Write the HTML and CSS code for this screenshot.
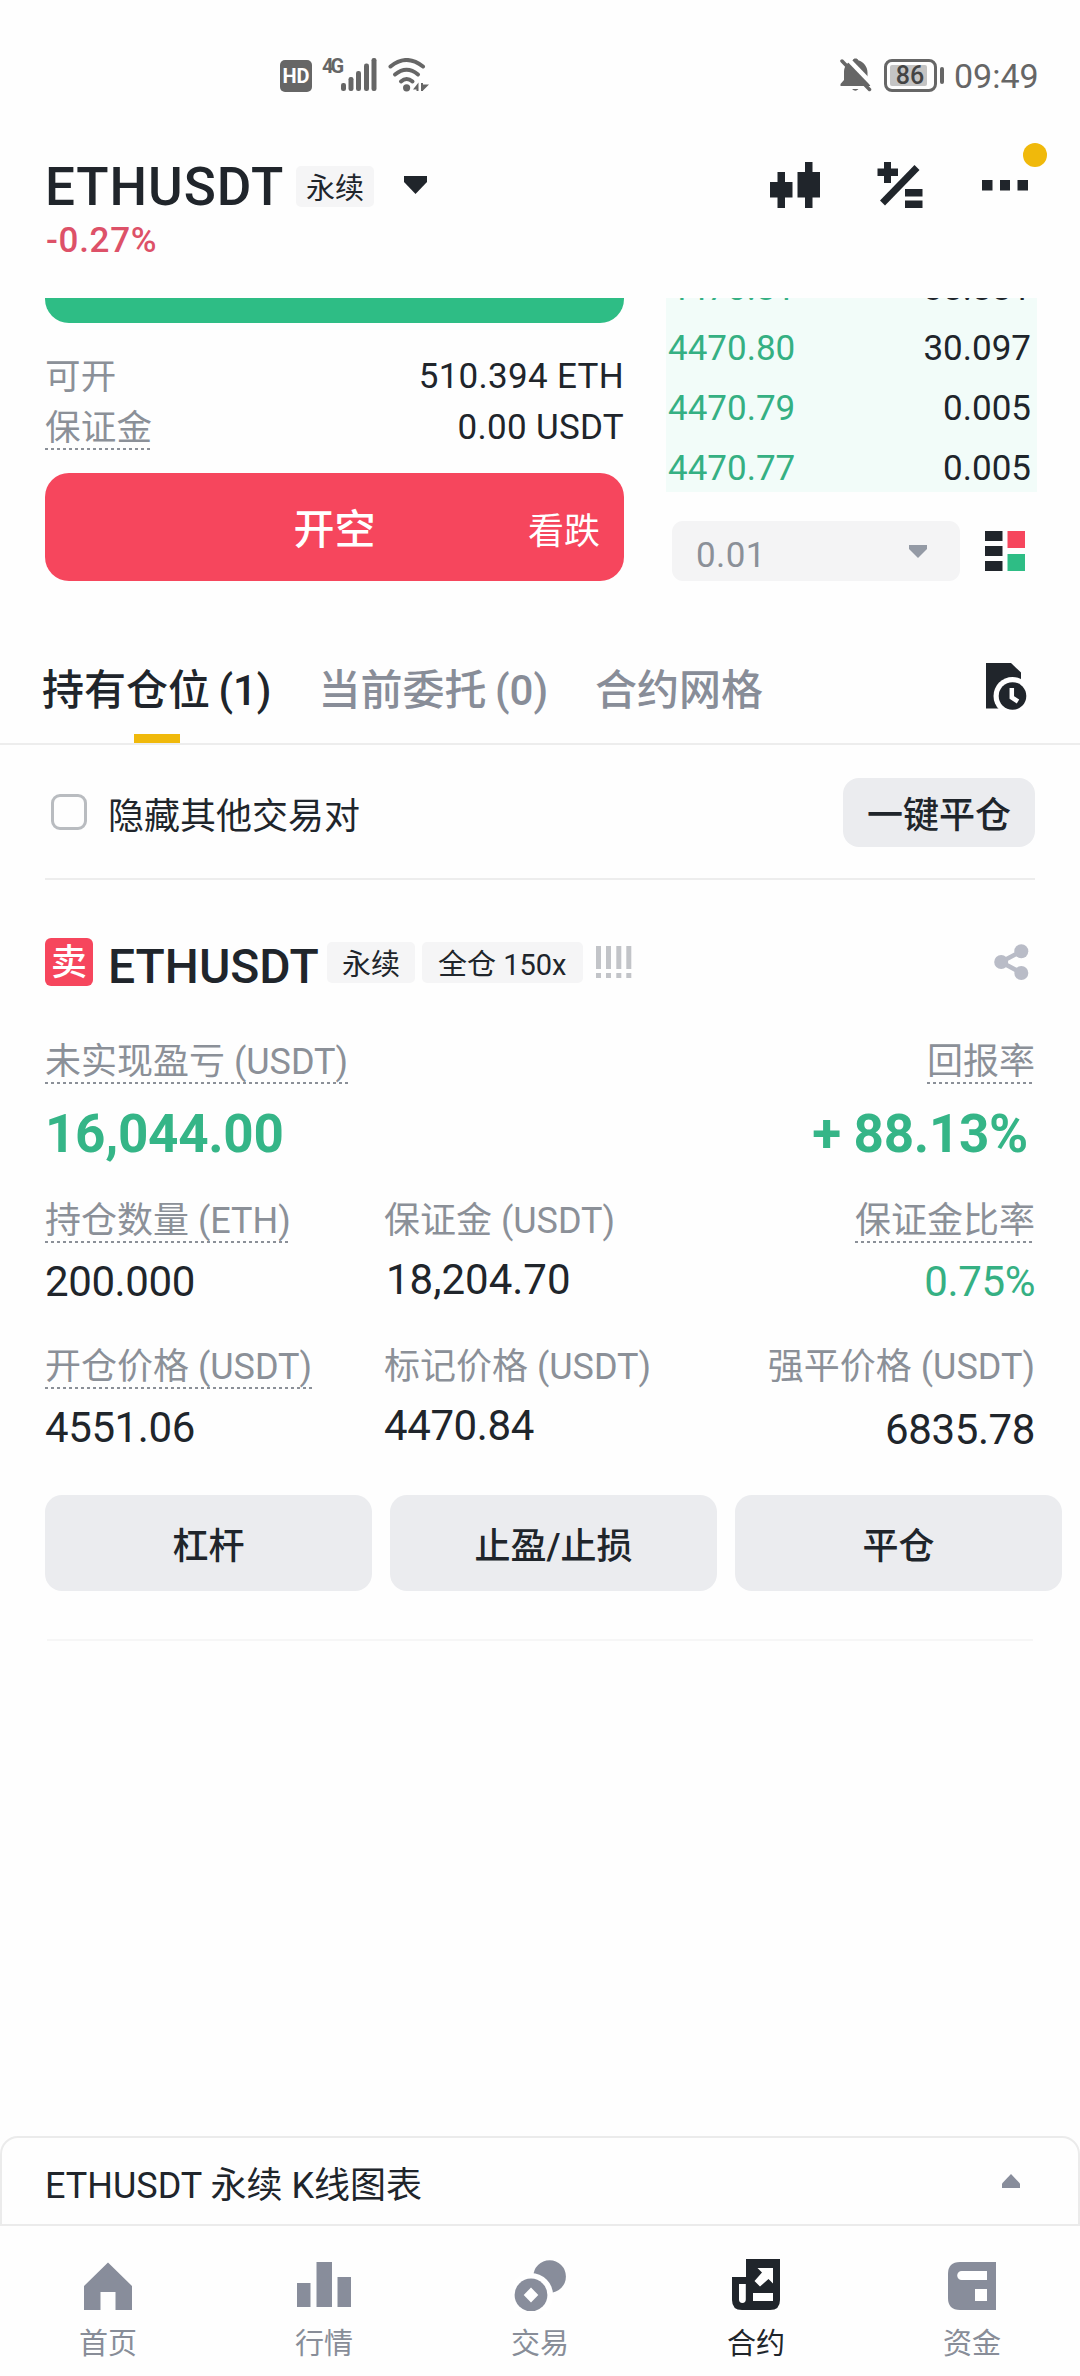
FILE: index.html
```html
<!DOCTYPE html>
<html lang="zh-CN">
<head>
    <meta charset="UTF-8">
    <meta name="viewport" content="width=device-width, initial-scale=1.0">
    <title>ETHUSDT 永续</title>

    <link rel="stylesheet" href="styles.css">
</head>
<body>
    <!-- Status bar -->
    <div class="status">
        <span class="hd">HD</span>
        <span class="net">4G</span>
        <svg class="signal" width="36" height="34" viewBox="0 0 36 34">
            <rect x="0" y="25" width="5" height="8" rx="2.2"/>
            <rect x="7.5" y="19" width="5" height="14" rx="2.2"/>
            <rect x="15" y="13" width="5" height="20" rx="2.2"/>
            <rect x="23" y="5.500" width="5" height="27.500" rx="2.2"/>
            <rect x="30.500" y="0" width="5" height="33" rx="2.2"/>
        </svg>
        <svg class="wifi" width="42" height="34" viewBox="0 0 42 34">
            <g fill="none" stroke="#666" stroke-width="4" stroke-linecap="round">
                <path d="M3.500 8.500Q19.600-4.500 36 8.500"/>
                <path d="M8 16.500Q19.600 7 31 16.500"/>
                <path d="M14 23.500Q19.600 18.500 25.500 23.500"/>
            </g>
            <circle cx="19.600" cy="29.800" r="3.600"/>
            <path d="M26 31.500l5.500-7v8.500h-2v-1.500zM34 25h2v1.500h6L36 32.500v.5h-2z"/>
        </svg>
        <svg class="bell" width="32" height="34" viewBox="0 0 32 34">
            <path d="M15.500 .5c1.500 0 2.400.6 2.800 1.800C23.500 4 27.500 8.500 27.500 14.500v8l3 5.500H.5v-2l3.500-4v-8C4 8.500 7.500 4 12.700 2.300 13.100 1.100 14 .5 15.500 .5zM12 31h6.500q-3 3.500-6.500 0z"/>
            <path d="M6-1L33 27" stroke="#fff" stroke-width="4.500"/>
            <path d="M2 3L29.500 31.500" stroke="#666" stroke-width="3.500" stroke-linecap="round"/>
        </svg>
        <span class="battery"><span class="battery-level">86</span></span>
        <span class="battery-tip"></span>
        <span class="time">09:49</span>
    </div>

    <!-- Header -->
    <div class="header">
        <div>
            <div class="pair">
                <h1>ETHUSDT</h1>
                <span class="tag">永续</span>
                <svg class="pair-caret" width="23" height="18" viewBox="0 0 23 18"><path d="M0 0h23v6L11.500 18 0 6z"/></svg>
            </div>
            <div class="change">-0.27%</div>
        </div>
        <div class="tools">
            <svg width="50" height="46" viewBox="0 0 50 46">
                <path d="M7.500 10h7.500v10h7.500v15.500H15V46H7.500V35.500H0V20h7.500zM35 0h7.500v10H50v25.500h-7.500V46H35V35.500h-7.500V10H35z"/>
            </svg>
            <svg width="46" height="46" viewBox="0 0 46 46">
                <path d="M7 0h7v6.500h7V14h-7v7H7v-7H.5V6.500H7zM28 27h17.500v7.500H28zM28 38.500h17.500V46H28z"/>
                <path d="M5.500 41L40 5.500" stroke="#20252b" stroke-width="7"/>
            </svg>
            <div class="more">
                <svg width="46" height="46" viewBox="0 0 46 46"><path d="M0 18h10.500v10.500H0zM18 18h10v10.500H18zM35.500 18H46v10.500H35.500z"/></svg>
                <span class="dot"></span>
            </div>
        </div>
    </div>

    <!-- Order form and order book -->
    <div class="trade">
        <div class="form">
            <div class="btn-long"></div>
            <div class="form-row"><span class="label">可开</span><span>510.394 ETH</span></div>
            <div class="form-row"><span class="label hint">保证金</span><span>0.00 USDT</span></div>
            <div class="btn-short">
                <span>开空</span>
                <span class="side">看跌</span>
            </div>
        </div>
        <div class="book-col">
            <div class="book">
                <div class="book-row"><span class="green">4470.81</span><span>38.881</span></div>
                <div class="book-row"><span class="green">4470.80</span><span>30.097</span></div>
                <div class="book-row"><span class="green">4470.79</span><span>0.005</span></div>
                <div class="book-row"><span class="green">4470.77</span><span>0.005</span></div>
            </div>
            <div class="book-tools">
                <div class="select">
                    <span>0.01</span>
                    <svg width="18" height="13" viewBox="0 0 18 13"><path d="M0 0h18v4L9 13 0 4z"/></svg>
                </div>
                <svg width="40" height="40" viewBox="0 0 40 40">
                    <path d="M0 0h17.500v10H0zM0 15h17.500v10H0zM0 30h17.500v10H0z"/>
                    <path d="M22.500 0H40v17H22.500z" fill="#f6465d"/>
                    <path d="M22.500 23H40v17H22.500z" fill="#2ebd85"/>
                </svg>
            </div>
        </div>
    </div>

    <!-- Tabs -->
    <div class="tabs">
        <div class="tab active">持有仓位 (1)</div>
        <div class="tab">当前委托 (0)</div>
        <div class="tab">合约网格</div>
        <svg class="history" width="41" height="48" viewBox="0 0 41 48">
            <path d="M0 0h25l10 9.500V45.500H0z"/>
            <circle cx="26.500" cy="33" r="19" fill="#fff"/>
            <circle cx="26.500" cy="33" r="13.800"/>
            <path d="M25.800 25v9.500l6.200 4" fill="none" stroke="#fff" stroke-width="4.500"/>
        </svg>
    </div>

    <div class="filter">
        <span class="checkbox"></span>
        <span class="filter-text">隐藏其他交易对</span>
        <span class="close-all">一键平仓</span>
    </div>

    <!-- Position -->
    <div class="position">
        <div class="position-head">
            <span class="sell">卖</span>
            <h2>ETHUSDT</h2>
            <span class="tag">永续</span>
            <span class="tag">全仓 150x</span>
            <svg class="risk" width="36" height="32" viewBox="0 0 36 32">
                <path d="M0 0h5v23H0zM10 0h5v23h-5zM20.300 0h5v23h-5zM30.300 0h5v23h-5zM0 27h5v5H0zM10 27h5v5h-5zM20.300 27h5v5h-5zM30.300 27h5v5h-5z"/>
            </svg>
            <svg class="share" width="35" height="36" viewBox="0 0 35 36">
                <path d="M27.500 7.200L7 18l20.500 11" fill="none" stroke="#b9bcc7" stroke-width="4.500"/>
                <circle cx="7.200" cy="18" r="7"/>
                <circle cx="27.300" cy="7.200" r="7"/>
                <circle cx="27.300" cy="29" r="7"/>
            </svg>
        </div>

        <div class="pnl">
            <div>
                <div class="label hint">未实现盈亏 (USDT)</div>
                <div class="pnl-value">16,044.00</div>
            </div>
            <div class="right">
                <div class="label hint">回报率</div>
                <div class="pnl-value roe">+ 88.13%</div>
            </div>
        </div>

        <div class="stats">
            <div>
                <div class="label hint">持仓数量 (ETH)</div>
                <div class="value">200.000</div>
            </div>
            <div class="middle">
                <div class="label">保证金 (USDT)</div>
                <div class="value margin">18,204.70</div>
            </div>
            <div class="right">
                <div class="label hint">保证金比率</div>
                <div class="value green">0.75%</div>
            </div>
            <div>
                <div class="label hint">开仓价格 (USDT)</div>
                <div class="value">4551.06</div>
            </div>
            <div class="middle">
                <div class="label">标记价格 (USDT)</div>
                <div class="value">4470.84</div>
            </div>
            <div class="right">
                <div class="label">强平价格 (USDT)</div>
                <div class="value liq">6835.78</div>
            </div>
        </div>

        <div class="actions">
            <span>杠杆</span>
            <span>止盈/止损</span>
            <span>平仓</span>
        </div>
    </div>

    <!-- Chart drawer -->
    <div class="drawer">
        <span>ETHUSDT 永续 K线图表</span>
        <svg width="18" height="14" viewBox="0 0 18 14"><path d="M9 0l9 9.500V14H0V9.500z"/></svg>
    </div>

    <!-- Bottom navigation -->
    <div class="nav">
        <div class="nav-item">
            <svg width="54" height="52" viewBox="0 0 54 52"><path d="M27 3.500L51 27v24H34.500V33H19.500v18H3V27z"/></svg>
            <span>首页</span>
        </div>
        <div class="nav-item">
            <svg width="54" height="52" viewBox="0 0 54 52"><path d="M0 24h13.500v24H0zM19.500 3H35v45H19.500zM40.500 18H54v30H40.500z"/></svg>
            <span>行情</span>
        </div>
        <div class="nav-item">
            <svg width="54" height="52" viewBox="0 0 54 52">
                <circle cx="36.600" cy="17.500" r="16.300"/>
                <circle cx="18" cy="36" r="22" fill="#fff"/>
                <circle cx="18" cy="36" r="16.400"/>
                <path d="M18 28.500l7.300 7.500-7.300 7.500-7.300-7.500z" fill="#fff"/>
            </svg>
            <span>交易</span>
        </div>
        <div class="nav-item current">
            <svg width="54" height="52" viewBox="0 0 54 52">
                <path d="M17 0h34v41q0 10-10 10H13Q3 51 3 41V18h14z"/>
                <path d="M10 25h6.800v15.500a3.400 3.400 0 0 1-6.800 0zM24 34h20v8H24zM28.500 9H44v15.500l-4.500-4.500L31 27.500l-5.500-5.500L33 13.500z" fill="#fff"/>
            </svg>
            <span>合约</span>
        </div>
        <div class="nav-item">
            <svg width="54" height="52" viewBox="0 0 54 52">
                <path d="M15 3h36v48H15Q3 51 3 39V15Q3 3 15 3z"/>
                <path d="M16.700 12H42v9H16.700a4.500 4.500 0 0 1 0-9zM30 30h12v12H30z" fill="#fff"/>
            </svg>
            <span>资金</span>
        </div>
    </div>
</body>
</html>
```
FILE: styles.css
```css
* {
    box-sizing: border-box;
}

body {
    margin: 0;
    width: 1080px;
    height: 2376px;
    display: flex;
    flex-direction: column;
    overflow: hidden;
    background-color: #fefefe;
    color: #20252b;
    font-family: Roboto, "Noto Sans CJK SC", sans-serif;
    font-size: 36px;
    line-height: 40px;
    white-space: nowrap;
}

h1, h2 {
    margin: 0;
    font-weight: 500;
}

svg {
    display: block;
    flex: none;
    fill: #20252b;
}

.green {
    color: #35b083;
}

/* Status bar */
.status {
    display: flex;
    align-items: flex-start;
    height: 156px;
    padding: 58px 0 0 280px;
    color: #666;
}

.status svg {
    fill: #666;
}

.hd {
    width: 32px;
    height: 32px;
    margin-top: 2px;
    border-radius: 5px;
    background-color: #666;
    color: #fff;
    font-size: 20px;
    font-weight: 700;
    line-height: 32px;
    text-align: center;
}

.net {
    width: 19px;
    margin-left: 10px;
    font-size: 20px;
    font-weight: 700;
    line-height: 16px;
    letter-spacing: -3px;
}

.wifi {
    margin-left: 10px;
}

.bell {
    margin-left: 411px;
}

.battery {
    width: 53px;
    height: 33px;
    margin: 1px 0 0 12px;
    padding: 3px;
    border: 3px solid #666;
    border-radius: 8px;
}

.battery-level {
    display: block;
    width: 37px;
    height: 21px;
    padding-left: 3px;
    border-radius: 2px;
    background-color: #c4c4c4;
    color: #444;
    font-size: 25px;
    font-weight: 500;
    line-height: 21px;
    text-align: center;
}

.battery-tip {
    width: 4px;
    height: 17px;
    margin: 9px 0 0 3px;
    border-radius: 2px;
    background-color: #666;
}

.time {
    margin-left: 10px;
    font-size: 34px;
    line-height: 36px;
}

/* Header */
.header {
    display: flex;
    justify-content: space-between;
    height: 142px;
    padding: 0 52px 0 45px;
}

.pair {
    display: flex;
    align-items: center;
    height: 60px;
}

.pair h1 {
    width: 251px;
    padding-top: 2px;
    font-size: 53px;
    line-height: 60px;
    letter-spacing: 0.9px;
}

.tag {
    height: 41px;
    border-radius: 5px;
    background-color: #f5f5f6;
    font-size: 29px;
    line-height: 44px;
    text-align: center;
}

.pair .tag {
    width: 78px;
    line-height: 47px;
}

.pair-caret {
    margin: -3px 0 0 30px;
}

.change {
    margin-top: 5px;
    padding-left: 1px;
    color: #dd5168;
    font-size: 35px;
    font-weight: 500;
    letter-spacing: 0.7px;
}

.tools {
    display: flex;
    margin-top: 6px;
}

.tools svg:nth-child(2) {
    margin: 0 59px 0 57px;
}

.more {
    position: relative;
}

.dot {
    position: absolute;
    top: -19px;
    right: -19px;
    width: 24px;
    height: 24px;
    border-radius: 50%;
    background-color: #f0b90b;
}

/* Order form */
.trade {
    display: flex;
    height: 283px;
    padding-left: 45px;
}

.form {
    width: 579px;
}

.btn-long {
    height: 25px;
    margin-bottom: 34px;
    border-radius: 0 0 24px 24px;
    background-color: #2ebd85;
}

.form-row {
    display: flex;
    justify-content: space-between;
    align-items: flex-start;
    height: 42px;
    margin-bottom: 9px;
    font-size: 35px;
    letter-spacing: 0.3px;
}

.label {
    height: 42px;
    color: #8b9098;
}

.hint {
    width: fit-content;
    background: repeating-linear-gradient(90deg, #8b9098 0 3px, transparent 3px 6px) left bottom / 100% 2px no-repeat;
}

.btn-short {
    position: relative;
    height: 108px;
    margin-top: 23px;
    border-radius: 24px;
    background-color: #f6465d;
    color: #fff;
    font-size: 41px;
    font-weight: 500;
    line-height: 114px;
    text-align: center;
}

.side {
    position: absolute;
    top: 2px;
    right: 24px;
    font-size: 36px;
    font-weight: 400;
}

.form-row .label {
    font-size: 35.5px;
}

/* Order book */
.book-col {
    width: 371px;
    margin-left: 42px;
}

.book {
    display: flex;
    flex-direction: column;
    justify-content: flex-end;
    gap: 11px;
    height: 194px;
    padding: 0 6px 0 2px;
    overflow: hidden;
    background-color: #f2fcf9;
    font-size: 35px;
    line-height: 51px;
}

.book-row {
    display: flex;
    flex: none;
    justify-content: space-between;
    height: 49px;
}

.book-tools {
    display: flex;
    align-items: center;
    justify-content: space-between;
    height: 60px;
    margin: 29px 12px 0 6px;
}

.select {
    display: flex;
    align-items: center;
    justify-content: space-between;
    width: 288px;
    height: 60px;
    padding: 0 33px 0 24px;
    border-radius: 11px;
    background-color: #f4f4f5;
    color: #8b9098;
    font-size: 35px;
    letter-spacing: 0.4px;
}

.select span {
    padding-top: 9px;
}

.select svg {
    fill: #949aa5;
}

/* Tabs */
.tabs {
    display: flex;
    align-items: flex-end;
    height: 164px;
    padding: 0 53px 0 42px;
    border-bottom: 2px solid #ededed;
}

.tab {
    position: relative;
    margin-right: 47px;
    padding-bottom: 22px;
    color: #888d98;
    font-size: 42px;
    font-weight: 500;
    line-height: 60px;
    word-spacing: -2px;
}

.active {
    color: #20252b;
}

.active::after {
    content: "";
    position: absolute;
    bottom: 0;
    left: 50%;
    width: 46px;
    height: 9px;
    margin-left: -23px;
    background-color: #f0b90b;
}

.history {
    margin: 0 0 32px auto;
}

.filter {
    display: flex;
    align-items: center;
    height: 135px;
    margin: 0 45px;
    border-bottom: 2px solid #ededed;
}

.checkbox {
    width: 36px;
    height: 36px;
    margin: 1px 0 0 6px;
    border: 3px solid #b9bcc0;
    border-radius: 9px;
}

.filter-text {
    margin-left: 21px;
    padding-top: 10px;
}

.close-all {
    width: 192px;
    height: 69px;
    margin: 1px 0 0 auto;
    border-radius: 16px;
    background-color: #ebecef;
    font-weight: 500;
    line-height: 77px;
    text-align: center;
}

/* Position */
.position {
    padding: 58px 45px 0;
}

.position-head {
    display: flex;
    align-items: center;
    height: 48px;
}

.sell {
    width: 48px;
    height: 48px;
    border-radius: 6px;
    background-color: #f6465d;
    color: #fff;
    font-weight: 500;
    line-height: 51px;
    text-align: center;
}

.position-head h2 {
    width: 219px;
    margin-left: 15px;
    padding-top: 9px;
    font-size: 48px;
    line-height: 48px;
}

.position-head .tag {
    margin-right: 7px;
    padding: 0 15px;
    line-height: 47px;
}

.position-head .tag + .tag {
    padding: 0 16px;
}

.risk {
    margin-left: 6px;
    fill: #c2c4c8;
}

.share {
    margin: 0 6px 0 auto;
    fill: #b9bcc7;
}

.right {
    display: flex;
    flex-direction: column;
    align-items: flex-end;
}

.pnl {
    display: flex;
    justify-content: space-between;
    margin-top: 56px;
}

.pnl-value {
    margin-top: 20px;
    color: #35b587;
    font-size: 53px;
    font-weight: 700;
    line-height: 60px;
    letter-spacing: -0.3px;
}

.roe {
    padding-right: 7px;
}

.stats {
    display: grid;
    grid-template-columns: 339px 1fr auto;
    row-gap: 40px;
    margin-top: 37px;
}

.value {
    margin-top: 14px;
    font-size: 42px;
    line-height: 50px;
    letter-spacing: -0.4px;
}

.middle .value {
    margin-top: 12px;
}

.middle .margin {
    padding-left: 2px;
    letter-spacing: 0;
}

.liq {
    position: relative;
    top: 2px;
}

.actions {
    display: flex;
    gap: 18px;
    margin: 42px -27px 0 0;
}

.actions span {
    flex: 1;
    height: 96px;
    border-radius: 17px;
    background-color: #ebecef;
    font-weight: 500;
    line-height: 104px;
    text-align: center;
}

.position::after {
    content: "";
    display: block;
    height: 2px;
    margin: 48px 2px 0;
    background-color: #f6f6f6;
}

/* Chart drawer */
.drawer {
    display: flex;
    align-items: center;
    justify-content: space-between;
    height: 90px;
    margin-top: auto;
    padding: 0 58px 0 43px;
    border: 2px solid #ebebeb;
    border-radius: 18px 18px 0 0;
}

.drawer span {
    padding-top: 9px;
}

.drawer svg {
    fill: #888d9b;
}

/* Bottom navigation */
.nav {
    display: flex;
    height: 150px;
    padding-top: 33px;
}

.nav-item {
    display: flex;
    flex: 1;
    flex-direction: column;
    align-items: center;
    gap: 13px;
    color: #888d98;
    font-size: 29px;
}

.nav-item svg {
    fill: #888d9b;
}

.current {
    color: #20252b;
}

.current svg {
    fill: #20252b;
}
```
